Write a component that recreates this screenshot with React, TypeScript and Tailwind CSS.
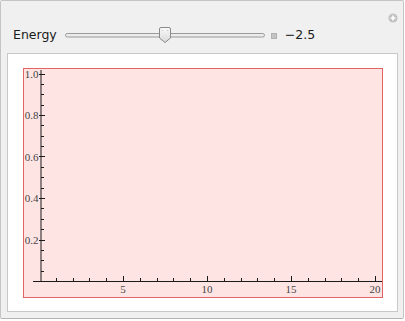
import React from "react"

const xTicks = Array.from({ length: 20 }, (_, i) => i + 1)
const yTicks = Array.from({ length: 20 }, (_, i) => (i + 1) * 0.05)

const px = (u: number) => 15 + 16.8 * u
const py = (v: number) => 212 - 207.5 * v

function Slider() {
  return (
    <svg width="200" height="18" viewBox="0 0 200 18" className="block">
      <defs>
        <linearGradient id="thumb" x1="0" y1="0" x2="0" y2="1">
          <stop offset="0" stopColor="#fafafa" />
          <stop offset="1" stopColor="#d8d8d8" />
        </linearGradient>
      </defs>
      <rect x="0.5" y="7.5" width="199" height="3.5" rx="1.75" fill="#ececec" stroke="#9a9a9a" />
      <path
        d="M94.5 3 Q94.5 1.5 96 1.5 H104 Q105.5 1.5 105.5 3 V12 L100 16.5 L94.5 12 Z"
        fill="url(#thumb)"
        stroke="#8a8a8a"
      />
      <path d="M97 4 L97.5 5 M103 4 L102.5 5" stroke="#b0b0b0" strokeWidth="0.8" />
    </svg>
  )
}

function Plot() {
  return (
    <svg width="358" height="228" viewBox="0 0 358 228" className="block">
      {/* axes */}
      <line x1="17" y1="1" x2="17" y2="212.5" stroke="#1a1a1a" strokeWidth="1" />
      <line x1="9" y1="212.5" x2="358" y2="212.5" stroke="#1a1a1a" strokeWidth="1" />
      {xTicks.map((u) => {
        const major = u % 5 === 0
        const x = Math.round(px(u)) + 0.5
        return <line key={u} x1={x} y1={212} x2={x} y2={major ? 207 : 209} stroke="#1a1a1a" strokeWidth="1" />
      })}
      {yTicks.map((v, i) => {
        const major = (i + 1) % 4 === 0
        const y = Math.round(py(v)) + 0.5
        return <line key={i} x1={major ? 15 : 17} x2={major ? 21 : 20} y1={y} y2={y} stroke="#1a1a1a" strokeWidth="1" />
      })}
      {[5, 10, 15, 20].map((u) => (
        <text
          key={u}
          x={px(u)}
          y={224}
          textAnchor="middle"
          fontFamily="'Liberation Serif', serif"
          fontSize="11"
          fill="#444"
        >
          {u}
        </text>
      ))}
      {[0.2, 0.4, 0.6, 0.8, 1.0].map((v) => (
        <text
          key={v}
          x={14.5}
          y={py(v) + 4}
          textAnchor="end"
          fontFamily="'Liberation Serif', serif"
          fontSize="11"
          fill="#444"
        >
          {v.toFixed(1)}
        </text>
      ))}
    </svg>
  )
}

export default function App() {
  return (
    <div className="w-[405px] h-[321px] bg-white">
      <div className="relative w-[404px] h-[319px] bg-[#f0f0f0] border border-[#c4c4c4] border-b-[#b4b4b4] rounded-[2px] flex flex-col pl-[6px] pr-[5px] pb-[6px]">
        <svg width="10" height="10" viewBox="0 0 10 10" className="absolute top-[12px] right-[5px]">
          <circle cx="5" cy="5" r="4.6" fill="#c2c2c2" />
          <path d="M5 2.6 V7.4 M2.6 5 H7.4" stroke="#fff" strokeWidth="1.6" />
        </svg>
        <div
          className="flex items-center h-[18px] mt-[25px] mb-[9px] pl-[6px] text-[12.5px] text-[#1a1a1a]"
          style={{ fontFamily: "'DejaVu Sans', sans-serif" }}
        >
          <span className="mr-[8px]">Energy</span>
          <Slider />
          <span className="ml-[6px] w-[6px] h-[6px] bg-[#c4c4c4] border border-[#b0b0b0] mr-[8px] mt-[1px]" />
          <span>−2.5</span>
        </div>
        <div className="flex-1 bg-white border border-[#c8c8c8] pl-[15px] pt-[14px]">
          <div className="w-[360px] h-[230px] bg-[#ffe4e4] border border-[#e26464]">
            <Plot />
          </div>
        </div>
      </div>
    </div>
  )
}
